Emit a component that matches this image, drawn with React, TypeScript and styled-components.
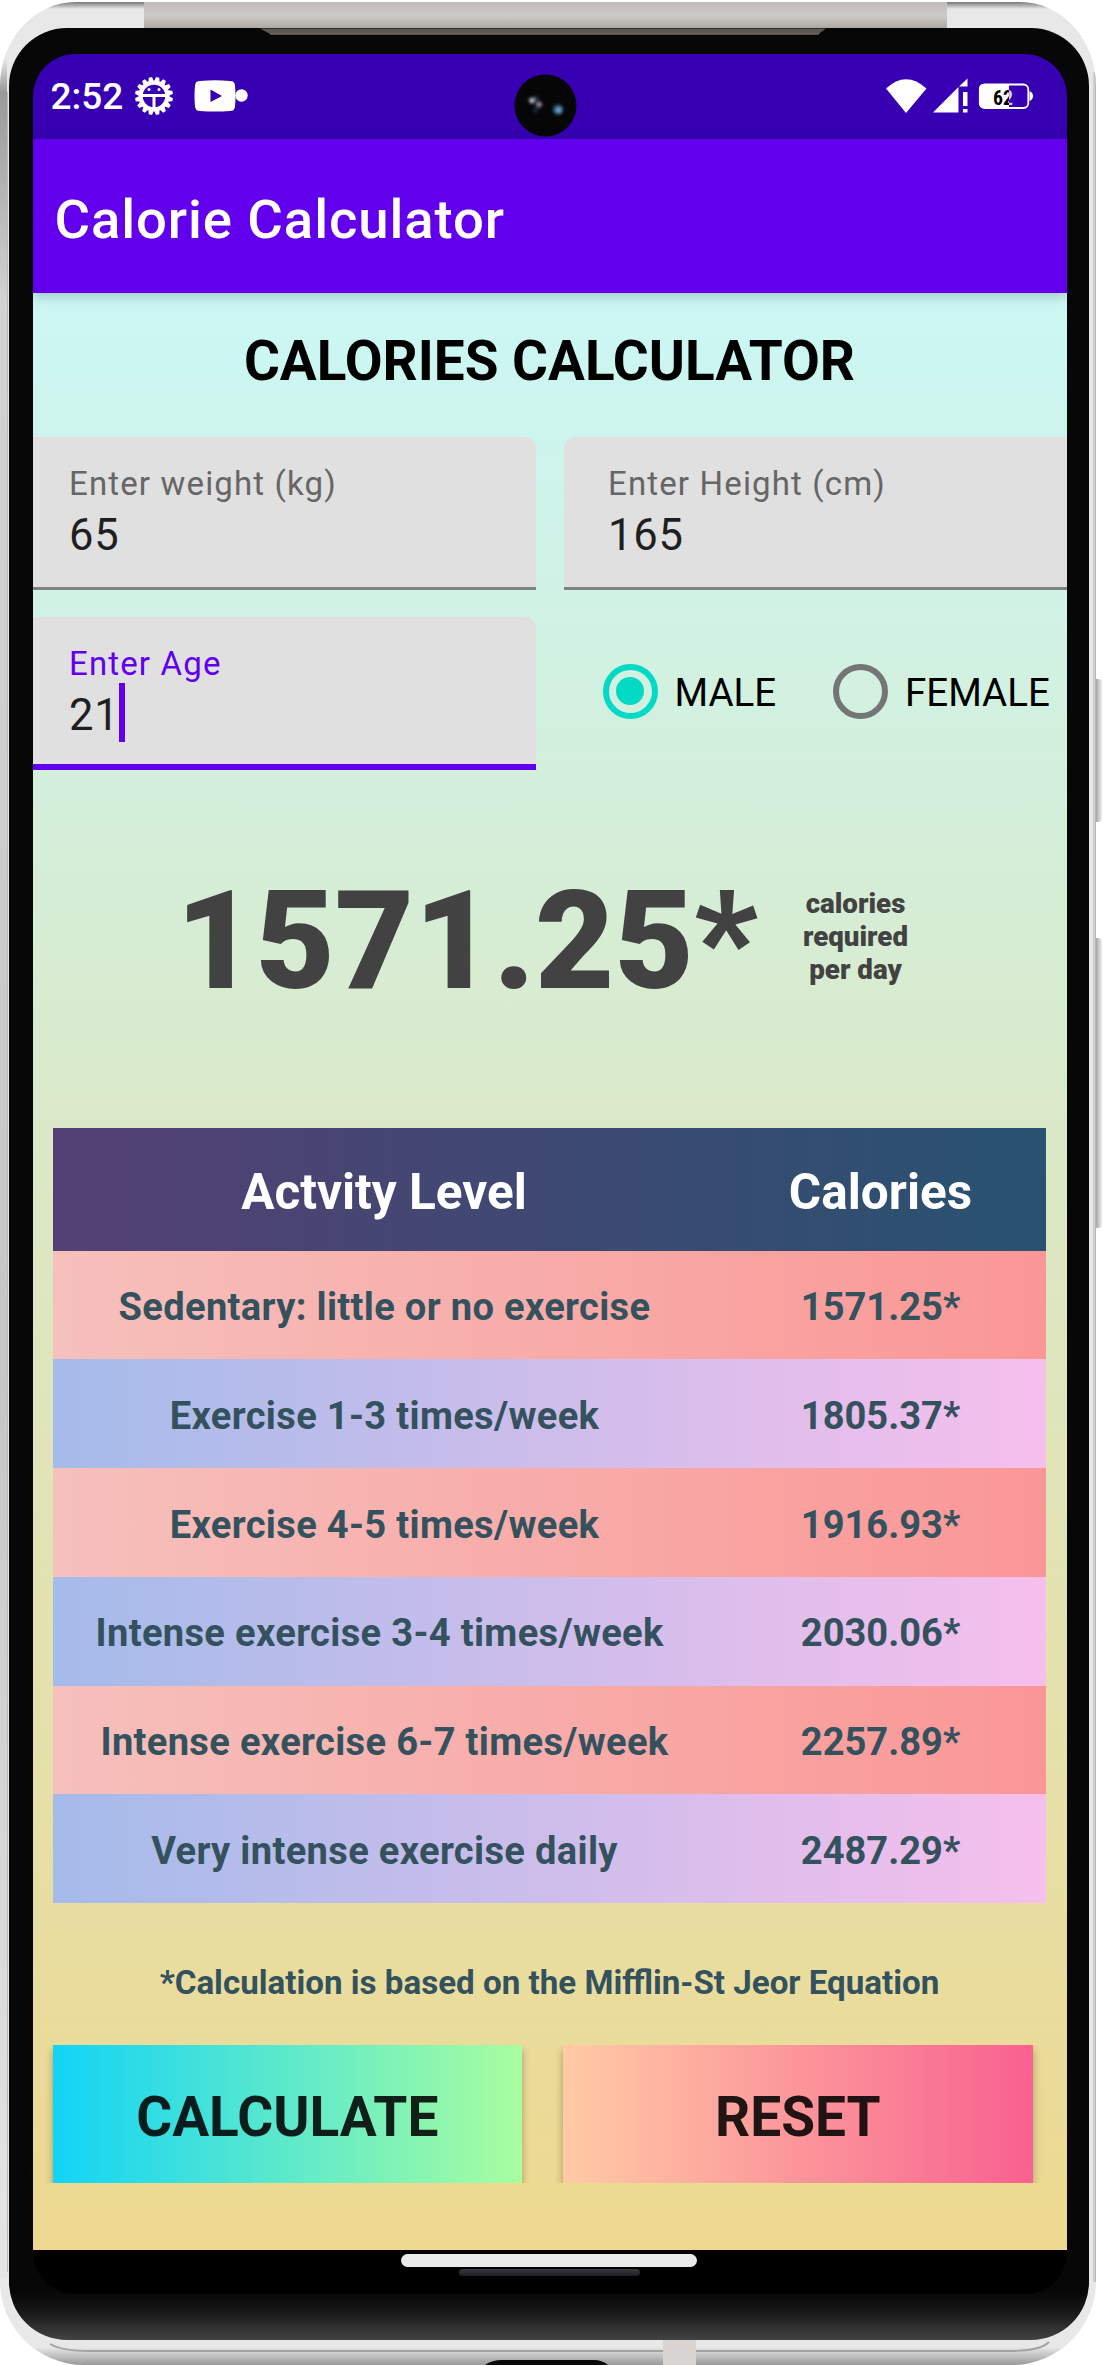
import React, { useState } from "react";
import styled, { createGlobalStyle, css } from "styled-components";

const Global = createGlobalStyle`
  * { box-sizing: border-box; }
  body { margin: 0; background: #fff; font-family: Roboto, sans-serif; }
  button, input { font-family: inherit; }
`;

const Stage = styled.main`
  position: relative;
  width: 1103px;
  height: 2365px;
  overflow: hidden;
`;

const Shell = styled.div`
  position: relative;
  width: 1096px;
  height: 2363px;
  margin-top: 2px;
  padding: 26px 7px 25px 9px;
  border-radius: 76px 76px 84px 84px / 84px 84px 84px 84px;
  overflow: hidden;
  background:
    linear-gradient(90deg, #b9b9b9, #b9b9b9) 7px 90px / 1px 2180px no-repeat,
    linear-gradient(180deg, #e8e8e8 0, #999 34px, #d2d2d2 244px, #c6c6c6 60%, #e5e5e5 100%) 0 56px / 7px 2220px no-repeat,
    linear-gradient(90deg, #e8e8e8, #b4b4b4) 100% 70px / 4px 2210px no-repeat,
    linear-gradient(180deg, #777 0, #e8e8e8 7px, #e8e8e8 2345px, #999 100%);
`;

const ShellDetail = styled.svg`
  position: absolute;
  inset: 0;
`;

const SideButton = styled.div<{ $top: number; $height: number }>`
  position: absolute;
  left: 1096px;
  top: ${(p) => p.$top}px;
  width: 6px;
  height: ${(p) => p.$height}px;
  border-radius: 0 4px 4px 0;
  background: linear-gradient(90deg, #a5a5a5, #ccc 50%, #eee);
`;

const Bezel = styled.div`
  position: relative;
  height: 2312px;
  padding: 25.5px 22.5px 46px 23.5px;
  border-radius: 58px;
  background: linear-gradient(180deg, #070707 0 97.9%, #181818 98.8%, #434343 100%);
`;

const Screen = styled.div`
  display: flex;
  flex-direction: column;
  height: 2240.5px;
  border-radius: 42px;
  overflow: hidden;
  background: #000;
`;

const StatusBar = styled.header`
  display: flex;
  align-items: center;
  height: 85.5px;
  padding: 0 33.5px 0 18px;
  color: #fff;
  background: #3700b3;
`;

const Clock = styled.span`
  width: 83px;
  padding-top: 2px;
  font-size: 37px;
  font-weight: 500;
  line-height: 44px;
`;

const StatusGap = styled.span`
  flex: 1;
`;

const AppBar = styled.div`
  position: relative;
  z-index: 1;
  display: flex;
  align-items: center;
  height: 154px;
  flex: none;
  padding: 6px 0 0 22px;
  color: #fff;
  background: #6200ee;
  box-shadow: 0 3px 12px rgba(0, 0, 0, 0.22);
  font-size: 54.5px;
  font-weight: 500;
  letter-spacing: 0.9px;
`;

const Content = styled.div`
  display: flex;
  flex-direction: column;
  height: 1957px;
  flex: none;
  background: linear-gradient(180deg, #cbf7f4 0%, #d4efdb 26%, #dae9c8 43%, #e8dea2 82%, #edd88f 100%);
`;

const Title = styled.h1`
  height: 144px;
  margin: 0;
  padding-top: 36px;
  text-align: center;
  font-size: 54.9px;
  line-height: 64px;
  font-weight: 700;
  color: #000;
`;

const FieldGrid = styled.div`
  display: grid;
  grid-template-columns: 503.5px 503.5px;
  column-gap: 27.5px;
  row-gap: 27.5px;
`;

const Field = styled.label<{ $focused?: boolean; $side: "left" | "right" }>`
  display: flex;
  flex-direction: column;
  height: 152.5px;
  padding: ${(p) => (p.$side === "left" ? "27px 0 0 36.5px" : "27px 0 0 44.5px")};
  border-radius: ${(p) => (p.$side === "left" ? "0 11px 0 0" : "11px 0 0 0")};
  border-bottom: ${(p) => (p.$focused ? "6px solid #6200ee" : "3px solid #808080")};
  background: #e0e0e0;
  color: ${(p) => (p.$focused ? "#6200ee" : "#666")};
`;

const FieldLabel = styled.span`
  font-size: 33px;
  line-height: 40px;
  letter-spacing: 1.15px;
`;

const FieldValue = styled.span`
  display: flex;
  align-items: center;
  height: 62px;
  font-size: 43.5px;
  letter-spacing: 0.8px;
  color: #1f1f1f;
`;

const Caret = styled.span`
  width: 6px;
  height: 59px;
  margin: 0 0 5px -1px;
  background: #6200ee;
`;

const RadioRow = styled.div`
  display: flex;
  align-items: center;
  height: 148px;
  padding-left: 39px;
`;

const Radio = styled.button<{ $width: number }>`
  display: flex;
  align-items: center;
  gap: 17px;
  flex: none;
  width: ${(p) => p.$width}px;
  padding: 0;
  border: 0;
  background: none;
  font-size: 38.5px;
  color: #000;
`;

const RadioText = styled.span`
  padding-top: 2px;
`;

const RadioMark = styled.span<{ $on: boolean }>`
  display: grid;
  place-items: center;
  flex: none;
  width: 55px;
  height: 55px;
  border: 6px solid ${(p) => (p.$on ? "#03dac5" : "#757575")};
  border-radius: 50%;
  ${(p) =>
    p.$on &&
    css`
      &::after {
        content: "";
        width: 28px;
        height: 28px;
        border-radius: 50%;
        background: #03dac5;
      }
    `}
`;

const Result = styled.section`
  display: flex;
  align-items: center;
  height: 358.5px;
  padding-left: 143.5px;
  color: #424242;
`;

const Total = styled.span`
  width: 581.5px;
  margin-top: -15px;
  font-size: 137px;
  line-height: 160px;
  font-weight: 900;
  white-space: nowrap;
`;

const Unit = styled.span`
  width: 196px;
  margin-top: -25px;
  text-align: center;
  font-size: 27.7px;
  line-height: 33px;
  font-weight: 900;
`;

const Table = styled.div`
  display: flex;
  flex-direction: column;
  width: 993px;
  margin-left: 20px;
`;

const rowPaint = {
  head: "linear-gradient(90deg, #544074, #285270)",
  rose: "linear-gradient(90deg, #f6c0bc, #fa9796)",
  violet: "linear-gradient(90deg, #a5bbea, #f6bfec)",
};

const TableRow = styled.div<{ $tone: keyof typeof rowPaint }>`
  display: grid;
  grid-template-columns: 663px 330px;
  align-items: center;
  text-align: center;
  height: ${(p) => (p.$tone === "head" ? 122.5 : 108.75)}px;
  padding-top: ${(p) => (p.$tone === "head" ? 6 : 4.5)}px;
  font-size: ${(p) => (p.$tone === "head" ? 49.5 : 38.1)}px;
  font-weight: 700;
  color: ${(p) => (p.$tone === "head" ? "#fff" : "#34515e")};
  background: ${(p) => rowPaint[p.$tone]};
`;

const Activity = styled.span`
  padding-left: 1px;
  letter-spacing: 0.33px;
  white-space: pre;
`;

const Footnote = styled.p`
  margin: 0;
  height: 142px;
  padding-top: 60px;
  text-align: center;
  font-size: 33.15px;
  line-height: 40px;
  font-weight: 700;
  color: #34515e;
`;

const Actions = styled.div`
  display: flex;
  gap: 41px;
  height: 137.5px;
  padding-left: 20px;
  overflow: hidden;
`;

const Action = styled.button<{ $from: string; $to: string }>`
  width: 469.5px;
  height: 138px;
  padding: 5px 0 0;
  border: 0;
  font-size: 55px;
  font-weight: 700;
  color: rgba(0, 0, 0, 0.87);
  background: linear-gradient(90deg, ${(p) => p.$from}, ${(p) => p.$to});
  box-shadow: 0 5px 8px rgba(0, 0, 0, 0.3);
`;

const NavArea = styled.footer`
  display: flex;
  flex-direction: column;
  align-items: center;
  gap: 2px;
  padding: 4px 2px 0 0;
`;

const NavPill = styled.span`
  width: 296px;
  height: 12.5px;
  border-radius: 7px;
  background: #ebebeb;
`;

const NavShadow = styled.span`
  width: 181px;
  height: 7px;
  margin-left: 2px;
  border-radius: 4px;
  background: linear-gradient(#3a393d, #1f1e24);
`;

const Camera = styled.svg`
  position: absolute;
  left: 514px;
  top: 73.5px;
`;

const teeth = Array.from({ length: 16 }, (_, i) => i * 22.5);

const GearIcon = () => (
  <svg width="40" height="40" viewBox="-20 -20 40 40">
    {teeth.map((a) => (
      <path key={a} d="M-3 -14 L-1.6 -19 L1.6 -19 L3 -14Z" fill="#fff" transform={`rotate(${a + 11.25})`} />
    ))}
    <circle r="13.3" fill="none" stroke="#fff" strokeWidth="4" />
    <path d="M-13 -0.5H13M0 -1V14" stroke="#fff" strokeWidth="3" />
    <circle cx="-5" cy="-6.500" r="1.500" fill="#fff" />
    <circle cx="5" cy="-6.500" r="1.500" fill="#fff" />
  </svg>
);

const VideoIcon = styled.svg`
  margin-left: 20px;
`;

const BatteryText = styled.text`
  font: 700 20px "Roboto Condensed", Roboto, sans-serif;
`;

const StatusIcons = () => (
  <svg width="148" height="38" viewBox="885 77 148 38">
    <path d="M886 88.500Q906 70 926.500 88.500L906 113Z" fill="#fff" />
    <path d="M933 112.500L958.500 87V112.500ZM959 86.500L967.500 78.500V86.500ZM963 92H967.500V106H963ZM963 109H967.500V112.500H963Z" fill="#fff" />
    <rect x="979.800" y="84.500" width="48.500" height="23.500" rx="5" fill="none" stroke="#fff" strokeWidth="1.800" />
    <path d="M1009 84V108H984Q979 108 979 103V89Q979 84 984 84ZM1029.500 91Q1033 92.500 1033 96T1029.500 101Z" fill="#fff" />
    <BatteryText x="993" y="104.500" textLength="10" lengthAdjust="spacingAndGlyphs" fill="#000">6</BatteryText>
    <BatteryText x="1003" y="104.500" textLength="10" lengthAdjust="spacingAndGlyphs" fill="url(#split)">2</BatteryText>
    <defs>
      <linearGradient id="split" gradientUnits="userSpaceOnUse" x1="1003" x2="1013" y1="0" y2="0">
        <stop offset=".6" stopColor="#000" />
        <stop offset=".6" stopColor="#d9ccf2" />
      </linearGradient>
    </defs>
  </svg>
);

const rows: [string, string][] = [
  ["Sedentary: little or no exercise", "1571.25*"],
  ["Exercise 1-3 times/week", "1805.37*"],
  ["Exercise 4-5 times/week", "1916.93*"],
  ["Intense exercise 3-4 times/week\u00a0", "2030.06*"],
  ["Intense exercise 6-7 times/week", "2257.89*"],
  ["Very intense exercise daily", "2487.29*"],
];

export default function App() {
  const [sex, setSex] = useState("MALE");
  return (
    <Stage>
      <Global />
      <SideButton $top={679} $height={143} />
      <SideButton $top={938} $height={290} />
      <Shell>
        <ShellDetail width="1096" height="2363" viewBox="0 2 1096 2363">
          <defs>
            <linearGradient id="antenna" x1="0" x2="0" y1="0" y2="1">
              <stop stopColor="#c2bbb8" />
              <stop offset=".5" stopColor="#cdcbc9" />
              <stop offset="1" stopColor="#aaa59f" />
            </linearGradient>
          </defs>
          <rect x="144" y="2" width="803" height="27" fill="url(#antenna)" />
          <rect x="663" y="2340" width="33" height="25" fill="#d8d4d2" />
          <path d="M50 2344Q62 2351 90 2351H663M696 2351H1010Q1040 2351 1049 2342" fill="none" stroke="#a2a2a2" strokeWidth="1.800" />
          <path d="M485 2365Q492 2360 502 2360H594Q602 2360 608 2365Z" fill="#080808" />
        </ShellDetail>
        <Bezel>
          <Screen>
            <StatusBar>
              <Clock>2:52</Clock>
              <GearIcon />
              <VideoIcon width="54" height="32" viewBox="0 0 54 32">
                <path d="M6 1Q21-.5 36 1Q41 1 41 6Q42 16 41 26Q41 31 36 31Q21 32 6 31Q1 31 1 26Q0 16 1 6Q1 1 6 1Z" fill="#fff" />
                <path d="M16.500 9.500V22L28 16Z" fill="#3700b3" />
                <circle cx="47.500" cy="15.500" r="6.200" fill="#fff" />
              </VideoIcon>
              <StatusGap />
              <StatusIcons />
            </StatusBar>
            <AppBar>Calorie Calculator</AppBar>
            <Content>
              <Title>CALORIES CALCULATOR</Title>
              <FieldGrid>
                <Field $side="left">
                  <FieldLabel>Enter weight (kg)</FieldLabel>
                  <FieldValue>65</FieldValue>
                </Field>
                <Field $side="right">
                  <FieldLabel>Enter Height (cm)</FieldLabel>
                  <FieldValue>165</FieldValue>
                </Field>
                <Field $side="left" $focused>
                  <FieldLabel>Enter Age</FieldLabel>
                  <FieldValue>21<Caret /></FieldValue>
                </Field>
                <RadioRow>
                  <Radio $width={230.5} onClick={() => setSex("MALE")}>
                    <RadioMark $on={sex === "MALE"} /><RadioText>MALE</RadioText>
                  </Radio>
                  <Radio $width={234} onClick={() => setSex("FEMALE")}>
                    <RadioMark $on={sex === "FEMALE"} /><RadioText>FEMALE</RadioText>
                  </Radio>
                </RadioRow>
              </FieldGrid>
              <Result>
                <Total>1571.25*</Total>
                <Unit>calories<br />required<br />per day</Unit>
              </Result>
              <Table>
                <TableRow $tone="head"><span>Actvity Level</span><span>Calories</span></TableRow>
                {rows.map(([name, value], i) => (
                  <TableRow key={name} $tone={i % 2 ? "violet" : "rose"}>
                    <Activity>{name}</Activity><span>{value}</span>
                  </TableRow>
                ))}
              </Table>
              <Footnote>*Calculation is based on the Mifflin-St Jeor Equation</Footnote>
              <Actions>
                <Action $from="#12d4f6" $to="#a9fe9f">CALCULATE</Action>
                <Action $from="#ffcba5" $to="#f96090">RESET</Action>
              </Actions>
            </Content>
            <NavArea><NavPill /><NavShadow /></NavArea>
          </Screen>
        </Bezel>
        <ShellDetail width="1096" height="40" viewBox="0 2 1096 40">
          <path d="M260 28.500H826L818 34.500H271Z" fill="#5b5750" />
          <path d="M270 34H819" stroke="#77756f" />
        </ShellDetail>
      </Shell>
      <Camera width="63" height="63" viewBox="-31.500 -31.500 63 63">
        <defs>
          <filter id="soft"><feGaussianBlur stdDeviation="1.500" /></filter>
        </defs>
        <circle r="31" fill="#060606" />
        <g filter="url(#soft)">
          <circle cx="-13.500" cy="-5" r="3" fill="#a9b6ba" />
          <circle cx="-9" cy="-7" r="2.500" fill="#15305a" />
          <circle cx="-6.500" cy="-1" r="3" fill="#84819e" />
          <circle cx="-10" cy="5" r="2.500" fill="#12284a" />
          <circle cx="12.500" cy="4" r="5.500" fill="#1d4468" />
          <circle cx="13" cy="4.500" r="3" fill="#6a9dc0" />
        </g>
      </Camera>
    </Stage>
  );
}
